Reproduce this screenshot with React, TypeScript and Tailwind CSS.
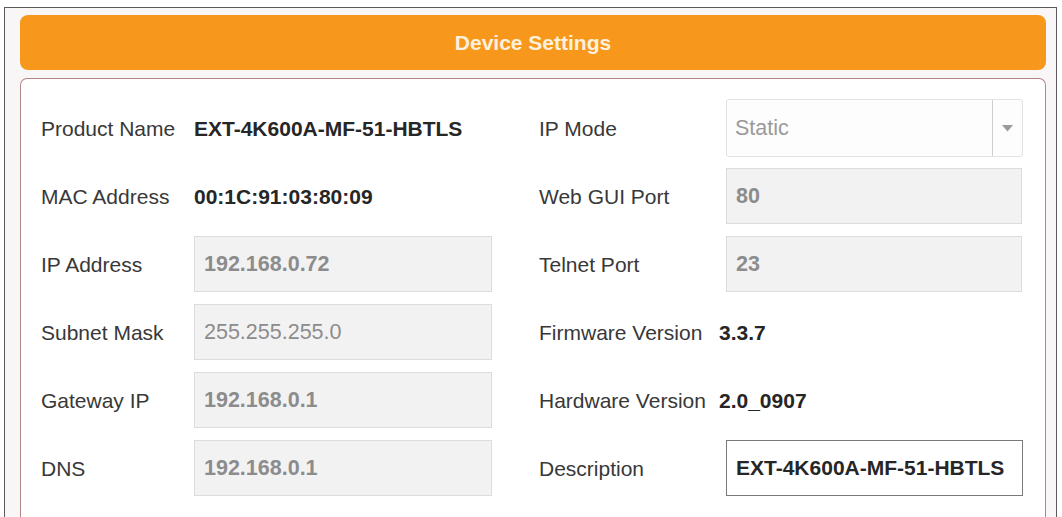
import React from "react";

const font = { fontFamily: '"Liberation Sans", Arial, sans-serif' };

function Label({ children, w }: { children: React.ReactNode; w: string }) {
  return <div className={`${w} shrink-0 text-[21px] text-[#383838] pt-[2px]`}>{children}</div>;
}

function Value({ children }: { children: React.ReactNode }) {
  return <div className="text-[21px] font-bold text-[#262626] pt-[2px]">{children}</div>;
}

function GrayInput({ children, w, bold = true }: { children: React.ReactNode; w: string; bold?: boolean }) {
  return (
    <div
      className={`${w} h-[56px] shrink-0 border border-[#dcdcdc] bg-[#f3f2f2] flex items-center pl-[9px] text-[21.5px] text-[#8c8c8c] ${bold ? "font-bold" : ""}`}
    >
      {children}
    </div>
  );
}

function Row({ left, right }: { left: React.ReactNode; right: React.ReactNode }) {
  return (
    <div className="h-[68px] flex items-center">
      <div className="w-[498px] shrink-0 flex items-center">{left}</div>
      <div className="flex items-center">{right}</div>
    </div>
  );
}

export default function App() {
  return (
    <div className="w-[1062px] h-[517px] overflow-hidden bg-white pl-[4px] pt-[7px]" style={font}>
      <div className="w-[1053px] h-[520px] border border-b-0 border-[#5a5a5a] bg-[#f8f6f6] pl-[15px] pr-[10px] pt-[7px]">
        <div className="h-[55px] rounded-[8px] bg-[#f7981d] flex items-center justify-center text-[21px] font-bold text-[#fdf0dc]">
          Device Settings
        </div>
        <div className="mt-[8px] h-[460px] border border-b-0 border-[#b58585] rounded-t-[7px] bg-white pt-[15px] pl-[20px]">
          <Row
            left={
              <>
                <Label w="w-[153px]">Product Name</Label>
                <Value>EXT-4K600A-MF-51-HBTLS</Value>
              </>
            }
            right={
              <>
                <Label w="w-[187px]">IP Mode</Label>
                <div className="w-[297px] h-[58px] border border-[#e2e2e2] rounded-[3px] bg-[#fdfdfd] flex items-center">
                  <div className="flex-1 pl-[8px] text-[21.5px] text-[#9a9a9a]">Static</div>
                  <div className="w-[30px] h-full border-l border-[#cfcfcf] flex items-center justify-center">
                    <svg width="11" height="7" viewBox="0 0 11 7">
                      <path d="M0 0 L11 0 L5.5 6.5 Z" fill="#9a9a9a" />
                    </svg>
                  </div>
                </div>
              </>
            }
          />
          <Row
            left={
              <>
                <Label w="w-[153px]">MAC Address</Label>
                <Value>00:1C:91:03:80:09</Value>
              </>
            }
            right={
              <>
                <Label w="w-[187px]">Web GUI Port</Label>
                <GrayInput w="w-[296px]">80</GrayInput>
              </>
            }
          />
          <Row
            left={
              <>
                <Label w="w-[153px]">IP Address</Label>
                <GrayInput w="w-[298px]">192.168.0.72</GrayInput>
              </>
            }
            right={
              <>
                <Label w="w-[187px]">Telnet Port</Label>
                <GrayInput w="w-[296px]">23</GrayInput>
              </>
            }
          />
          <Row
            left={
              <>
                <Label w="w-[153px]">Subnet Mask</Label>
                <GrayInput w="w-[298px]" bold={false}>255.255.255.0</GrayInput>
              </>
            }
            right={
              <>
                <Label w="w-[180px]">Firmware Version</Label>
                <Value>3.3.7</Value>
              </>
            }
          />
          <Row
            left={
              <>
                <Label w="w-[153px]">Gateway IP</Label>
                <GrayInput w="w-[298px]">192.168.0.1</GrayInput>
              </>
            }
            right={
              <>
                <Label w="w-[180px]">Hardware Version</Label>
                <Value>2.0_0907</Value>
              </>
            }
          />
          <Row
            left={
              <>
                <Label w="w-[153px]">DNS</Label>
                <GrayInput w="w-[298px]">192.168.0.1</GrayInput>
              </>
            }
            right={
              <>
                <Label w="w-[187px]">Description</Label>
                <div className="w-[297px] h-[56px] border border-[#7a7a7a] bg-white flex items-center pl-[9px] text-[21px] font-bold text-[#262626]">
                  EXT-4K600A-MF-51-HBTLS
                </div>
              </>
            }
          />
        </div>
      </div>
    </div>
  );
}
